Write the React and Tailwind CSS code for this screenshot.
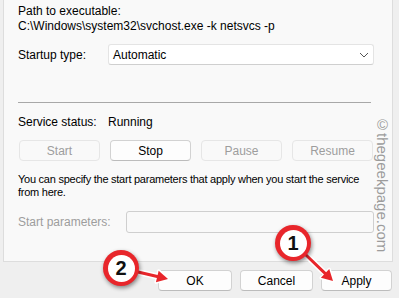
import React from 'react';

const font = { fontFamily: '"Liberation Sans", Arial, sans-serif' };

const Btn = ({ label, disabled, className = '' }) => (
  <div
    className={`flex items-center justify-center rounded-[4px] border text-[12px] ${
      disabled
        ? 'border-[#e6e6e6] bg-[#f9f9f9] text-[#9d9d9d]'
        : 'border-[#d2d2d2] border-b-[#bcbcbc] bg-[#fdfdfd] text-black'
    } ${className}`}
  >
    {label}
  </div>
);

const Badge = ({ n }) => (
  <div className="flex h-[36px] w-[36px] items-center justify-center rounded-full bg-[#e8262b] shadow-[1px_2px_4px_rgba(0,0,0,0.45)]">
    <div className="flex h-[27px] w-[27px] items-center justify-center rounded-full bg-white text-[20px] font-bold text-[#111]">
      {n}
    </div>
  </div>
);

const Arrow = ({ x1, y1, x2, y2 }) => {
  const a = Math.atan2(y2 - y1, x2 - x1);
  const len = 11;
  const w = 6;
  const bx = x2 - Math.cos(a) * len;
  const by = y2 - Math.sin(a) * len;
  const px = -Math.sin(a) * w;
  const py = Math.cos(a) * w;
  const head = `${x2},${y2} ${bx + px},${by + py} ${bx - px},${by - py}`;
  return (
    <g>
      <line x1={x1} y1={y1} x2={bx} y2={by} stroke="white" strokeWidth="6" strokeLinecap="round" />
      <polygon points={head} fill="white" stroke="white" strokeWidth="3" strokeLinejoin="round" />
      <line x1={x1} y1={y1} x2={bx} y2={by} stroke="#e8262b" strokeWidth="3" strokeLinecap="round" />
      <polygon points={head} fill="#e8262b" />
    </g>
  );
};

export default function App() {
  return (
    <div className="relative h-[298px] w-[399px] overflow-hidden bg-[#efefef] text-black" style={font}>
      <div className="ml-[3px] h-[262px] w-[390px] border-x border-b border-[#dddddd] bg-[#f9f9f9] pl-[14px] text-[12px]">
        <div className="pt-[4px] leading-[15px]">
          <div>Path to executable:</div>
          <div className="whitespace-nowrap">C:\Windows\system32\svchost.exe -k netsvcs -p</div>
        </div>

        <div className="mt-[10px] flex items-center">
          <div className="w-[90px]">Startup type:</div>
          <div className="flex h-[21px] w-[266px] items-center justify-between rounded-[3px] border border-[#e4e4e4] border-b-[#cfcfcf] bg-white pl-[4px] pr-[4px]">
            <span>Automatic</span>
            <svg width="10" height="6" viewBox="0 0 10 6">
              <path d="M1 1 L5 5 L9 1" fill="none" stroke="#555" strokeWidth="1" />
            </svg>
          </div>
        </div>

        <div className="mt-[37px] h-px w-[353px] bg-[#a8a8a8]" />

        <div className="mt-[12px] flex items-center leading-[14px]">
          <div className="w-[90px]">Service status:</div>
          <div>Running</div>
        </div>

        <div className="mt-[11px] flex gap-[10px] pl-[1px]">
          <Btn label="Start" disabled className="h-[21px] w-[81px]" />
          <Btn label="Stop" className="h-[21px] w-[81px]" />
          <Btn label="Pause" disabled className="h-[21px] w-[81px]" />
          <Btn label="Resume" disabled className="h-[21px] w-[81px]" />
        </div>

        <div className="mt-[12px] text-[11px] leading-[13px] tracking-[-0.25px]">
          <div className="whitespace-nowrap">You can specify the start parameters that apply when you start the service</div>
          <div>from here.</div>
        </div>

        <div className="mt-[12px] flex items-center">
          <div className="w-[108px] text-[#9d9d9d]">Start parameters:</div>
          <div className="h-[22px] w-[248px] rounded-[3px] border border-[#cfcfcf] bg-[#f9f9f9]" />
        </div>
      </div>

      <div className="mt-[8px] flex gap-[8px] pl-[158px]">
        <Btn label="OK" className="h-[21px] w-[74px]" />
        <Btn label="Cancel" className="h-[21px] w-[73px]" />
        <Btn label="Apply" className="h-[21px] w-[71px]" />
      </div>

      <div
        className="absolute left-[374px] top-[116px] text-[15px] leading-[17px] text-[#9c9c9c]"
        style={{ writingMode: 'vertical-rl', fontFamily: '"Liberation Sans", sans-serif' }}
      >
        ©thegeekpage.com
      </div>

      <svg className="absolute left-0 top-0" width="399" height="298">
        <Arrow x1={138} y1={272} x2={168} y2={279} />
        <Arrow x1={306} y1={255} x2={333} y2={281} />
      </svg>
      <div className="absolute left-[103px] top-[250px]">
        <Badge n="2" />
      </div>
      <div className="absolute left-[275px] top-[225px]">
        <Badge n="1" />
      </div>
    </div>
  );
}
